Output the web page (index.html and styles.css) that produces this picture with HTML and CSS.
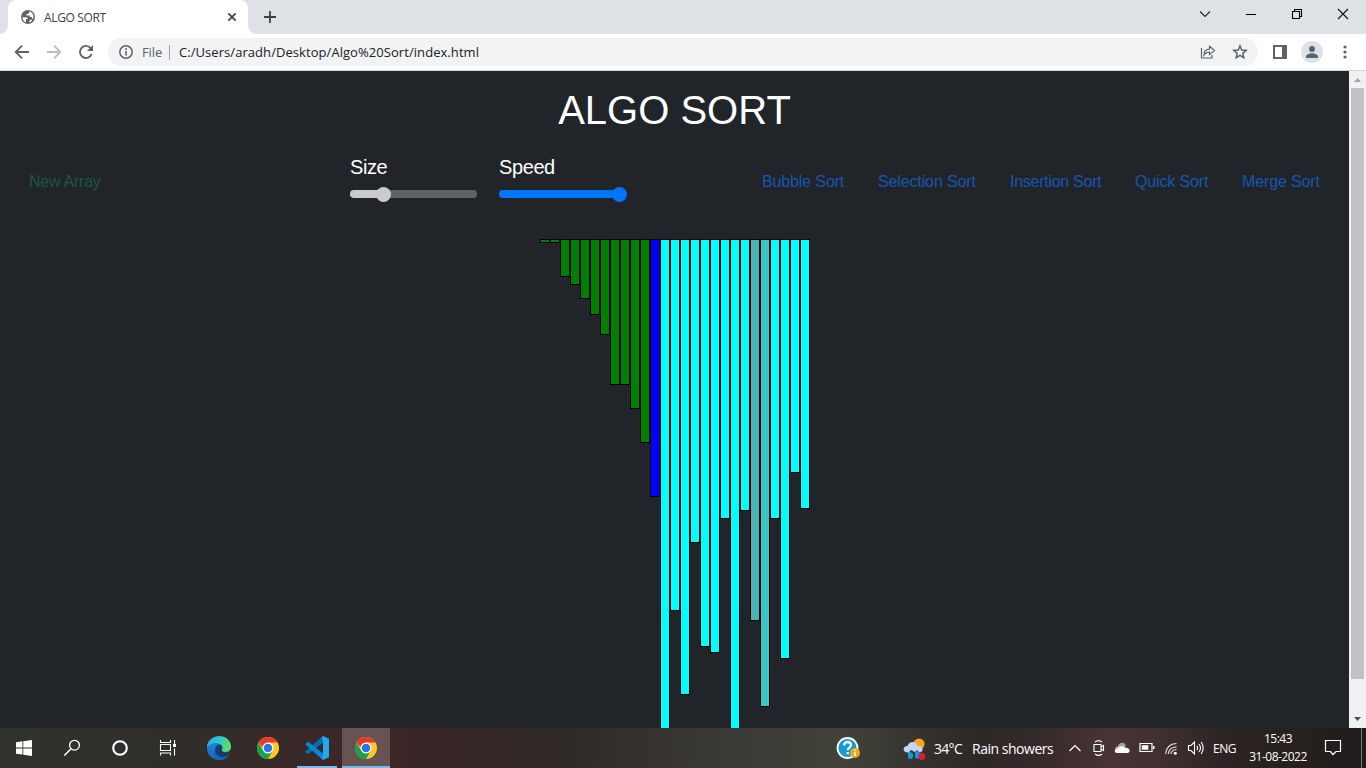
FILE: index.html
```html
<!DOCTYPE html>
<html lang="en">
<head>
<meta charset="utf-8">
<title>ALGO SORT</title>
<link rel="stylesheet" href="styles.css">
</head>
<body>
<div class="screen">
  <header class="tabstrip">
    <div class="tab">
      <svg class="globe" width="14" height="14" viewBox="0 0 14 14"><circle cx="7" cy="7" r="7" fill="#5f6368"/><path d="M1.4 7.2h3.2c1.6 0 2.3.8 2.3 1.8H5v3.3C2.9 11.7 1.4 9.600 1.400 7.200zM8 1.500v1.300c0 .7-.6 1.200-1.300 1.200H5.400v1.400h3.400v1.700h2.100v1.300h1.500C13.200 5 11 1.900 8 1.500zM8.200 12.400v-1.300l1.400-1.300h1.900c-.7 1.400-1.900 2.300-3.300 2.600z" fill="#fff"/></svg>
      <span class="tab-title">ALGO SORT</span>
      <svg class="tab-close" width="10" height="10" viewBox="0 0 10 10"><path d="M1.300 1.300l7.400 7.400M8.700 1.300l-7.400 7.400" stroke="#3c4043" stroke-width="1.700"/></svg>
    </div>
    <svg class="new-tab" width="12" height="12" viewBox="0 0 12 12"><path d="M6 0v12M0 6h12" stroke="#3c4043" stroke-width="1.800"/></svg>
    <div class="window-controls">
      <svg width="12" height="12" viewBox="0 0 12 12"><path d="M1 3.500l5 5 5-5" fill="none" stroke="#222" stroke-width="1.100"/></svg>
      <svg width="12" height="12" viewBox="0 0 12 12"><path d="M1 6.500h10" stroke="#000"/></svg>
      <svg width="12" height="12" viewBox="0 0 12 12"><path d="M1.500 3.500h7v7h-7zM3.500 3.500v-2h7v7h-2" fill="none" stroke="#000" stroke-width="1.100"/></svg>
      <svg width="12" height="12" viewBox="0 0 12 12"><path d="M1 1l10 10M11 1L1 11" stroke="#111" stroke-width="1.100"/></svg>
    </div>
  </header>
  <div class="toolbar">
    <div class="nav-icons">
      <svg width="16" height="16" viewBox="0 0 16 16"><path d="M15 8H2M8 1.700L1.700 8 8 14.300" fill="none" stroke="#5f6368" stroke-width="1.800"/></svg>
      <svg width="16" height="16" viewBox="0 0 16 16"><path d="M1 8h13M8 1.700L14.300 8 8 14.300" fill="none" stroke="#b9bbbd" stroke-width="1.800"/></svg>
      <svg width="16" height="16" viewBox="0 0 16 16"><path d="M13.600 10A6 6 0 1 1 12.600 4.100" fill="none" stroke="#5f6368" stroke-width="1.900"/><path d="M15 1v6H9z" fill="#5f6368"/></svg>
    </div>
    <div class="omnibox">
      <svg width="14" height="14" viewBox="0 0 14 14"><circle cx="7" cy="7" r="6.200" fill="none" stroke="#5f6368" stroke-width="1.500"/><path d="M7 6v4.500M7 3.300v1.600" stroke="#5f6368" stroke-width="1.600"/></svg>
      <span class="scheme">File</span>
      <span class="divider"></span>
      <span class="url">C:/Users/aradh/Desktop/Algo%20Sort/index.html</span>
      <svg class="share" width="16" height="16" viewBox="0 0 16 16"><path d="M1.500 4v10h10.500v-3" fill="none" stroke="#5f6368" stroke-width="1.200"/><path d="M4 11c.2-4 2.500-5.900 5.500-5.900V2.200L14.600 6.500 9.500 10.600V8C7 8 5.500 8.900 4 11z" fill="none" stroke="#5f6368" stroke-width="1.200"/></svg>
      <svg class="star" width="16" height="16" viewBox="0 0 16 16"><path d="M8 2l1.750 4.050 4.400.4-3.320 2.900.98 4.300L8 11.400l-3.810 2.250.98-4.300-3.320-2.900 4.400-.4z" fill="none" stroke="#5f6368" stroke-width="1.500"/></svg>
    </div>
    <svg class="side-panel" width="14" height="14" viewBox="0 0 14 14"><path d="M0 0h14v14H0zM2 2v10h7V2z" fill="#5f6368" fill-rule="evenodd"/></svg>
    <svg class="profile" width="22" height="22" viewBox="0 0 22 22"><circle cx="11" cy="11" r="11" fill="#dee1e6"/><circle cx="11" cy="8" r="3" fill="#55617a"/><path d="M5 17v-1.500c0-2 3.500-3.300 6-3.300s6 1.300 6 3.300V17z" fill="#55617a"/></svg>
    <svg class="menu" width="4" height="14" viewBox="0 0 4 14"><circle cx="2" cy="2" r="1.600" fill="#5f6368"/><circle cx="2" cy="7" r="1.600" fill="#5f6368"/><circle cx="2" cy="12" r="1.600" fill="#5f6368"/></svg>
  </div>
  <div class="viewport">
    <main class="page">
      <h1>ALGO SORT</h1>
      <nav class="controls">
        <a class="new-array">New Array</a>
        <div class="sliders">
          <div class="field"><span class="label">Size</span><div class="slider size"><i class="thumb"></i></div></div>
          <div class="field"><span class="label">Speed</span><div class="slider speed"><i class="thumb"></i></div></div>
        </div>
        <div class="sorts"><a class="s1">Bubble Sort</a><a class="s2">Selection Sort</a><a class="s3">Insertion Sort</a><a class="s4">Quick Sort</a><a class="s5">Merge Sort</a></div>
      </nav>
      <div class="bars">
        <i class="bar done" style="height:4px"></i><i class="bar done" style="height:4px"></i><i class="bar done" style="height:38px"></i><i class="bar done" style="height:46px"></i><i class="bar done" style="height:60px"></i><i class="bar done" style="height:76px"></i><i class="bar done" style="height:96px"></i><i class="bar done" style="height:146px"></i><i class="bar done" style="height:146px"></i><i class="bar done" style="height:170px"></i><i class="bar done" style="height:204px"></i><i class="bar current" style="height:258px"></i><i class="bar" style="height:500px"></i><i class="bar" style="height:372px"></i><i class="bar" style="height:456px"></i><i class="bar" style="height:304px"></i><i class="bar" style="height:408px"></i><i class="bar" style="height:414px"></i><i class="bar" style="height:280px"></i><i class="bar" style="height:500px"></i><i class="bar" style="height:272px"></i><i class="bar fade-a" style="height:382px"></i><i class="bar fade-b" style="height:468px"></i><i class="bar" style="height:280px"></i><i class="bar" style="height:420px"></i><i class="bar" style="height:234px"></i><i class="bar" style="height:270px"></i>
      </div>
    </main>
    <div class="scrollbar">
      <svg width="17" height="17" viewBox="0 0 17 17"><path d="M5 11l3.500-4 3.500 4z" fill="#a3a3a3"/></svg>
      <div class="scroll-thumb"></div>
      <svg width="17" height="17" viewBox="0 0 17 17"><path d="M5 6l3.500 4L12 6z" fill="#505050"/></svg>
    </div>
  </div>
  <footer class="taskbar">
    <div class="apps">
      <div class="app"><svg width="16" height="16" viewBox="0 0 16 16"><path d="M0 2.300L6.500 1.300v6.200H0zM7.300 1.200L16 0v7.500H7.300zM0 8.400h6.500v6.200L0 13.700zM7.300 8.400H16V16l-8.700-1.300z" fill="#fff"/></svg></div>
      <div class="app"><svg width="18" height="18" viewBox="0 0 18 18"><circle cx="11.500" cy="6.200" r="4.900" fill="none" stroke="#fff" stroke-width="1.300"/><path d="M8 9.800L1.300 16.500" stroke="#fff" stroke-width="1.500"/></svg></div>
      <div class="app"><svg width="18" height="18" viewBox="0 0 18 18"><circle cx="9" cy="9" r="6.800" fill="none" stroke="#fff" stroke-width="2.100"/></svg></div>
      <div class="app"><svg width="18" height="18" viewBox="0 0 18 18"><path d="M1.500 1v2.500h10V1M1.500 16.500V14h10v2.500M1.500 5.500h10v6h-10zM15.500 1v4M15.500 9.500v7" fill="none" stroke="#fff" stroke-width="1.100"/><path d="M14 5h3v3h-3z" fill="#fff"/></svg></div>
      <div class="app edge"><svg width="24" height="24" viewBox="0 0 24 24"><defs><linearGradient id="eg" x1="0" y1=".2" x2="1" y2=".5"><stop offset="0" stop-color="#2ea9e6"/><stop offset=".5" stop-color="#31c7cc"/><stop offset="1" stop-color="#62df59"/></linearGradient><linearGradient id="eb" x1="0" y1="0" x2="0" y2="1"><stop offset="0" stop-color="#238bd8"/><stop offset="1" stop-color="#116cc5"/></linearGradient></defs><circle cx="12" cy="12" r="12" fill="url(#eb)"/><path d="M0 11C1-2 22-4 24 10c.3 5-4.500 7-8.500 5.300-2-.9 0-1.800-.1-3.500C15 6 5 5 0 11z" fill="url(#eg)"/><path d="M8 14c0-3.200 2-5.100 4.500-5.500 2 .5 3 1.800 2.900 3.400-.1 1.500-1.600 1.900-.3 3.300 2.500 2 6 1 8 .6-1 4-5 6-8.500 5.500C10.500 20.500 8 17 8 14z" fill="#123f73"/><path d="M8 14c0 4 3 7.500 6.800 7.700 3 .2 5.600-1 7.200-3.200C20 22.500 16 24.300 12 24 7 23.500 4.500 18 8 14z" fill="#1565b0"/><path d="M14.500 12c-.1 1.600-1 2 .1 3.300C17 18 23 17 24 12.500V18l-2 .2c-3 .6-6.500 0-8.500-2.500-1-1.500-.2-3 1-3.700z" fill="#34302c"/></svg></div>
      <div class="app chrome"><svg width="22" height="22" viewBox="0 0 22 22"><circle cx="11" cy="11" r="11" fill="#ffc91f"/><path d="M1.470 5.500A11 11 0 0 1 20.530 5.500H11v11z" fill="#e9382d"/><path d="M1.470 5.500A11 11 0 0 0 11 22L15.760 13.750H6.240z" fill="#1aa14e"/><circle cx="11" cy="11" r="5.500" fill="#fff"/><circle cx="11" cy="11" r="4.300" fill="#2b73e8"/></svg></div>
      <div class="app running"><svg width="24" height="24" viewBox="0 0 24 24"><path d="M18 0v6.600L3.200 18.300.2 15.600z" fill="#006fb8"/><path d="M.2 8.400l3-2.700L18 17.400V24z" fill="#0688d2"/><path d="M18 0l6 2.800v18.400L18 24l-1-1 1-5.600V6.600L17 1z" fill="#25a7ee"/></svg></div>
      <div class="app active"><svg width="22" height="22" viewBox="0 0 22 22"><circle cx="11" cy="11" r="11" fill="#ffc91f"/><path d="M1.470 5.500A11 11 0 0 1 20.530 5.500H11v11z" fill="#e9382d"/><path d="M1.470 5.500A11 11 0 0 0 11 22L15.760 13.750H6.240z" fill="#1aa14e"/><circle cx="11" cy="11" r="5.500" fill="#fff"/><circle cx="11" cy="11" r="4.300" fill="#2b73e8"/></svg></div>
    </div>
    <svg class="help" width="24" height="24" viewBox="0 0 24 24"><circle cx="11.500" cy="11" r="10" fill="#1299d6" stroke="#fff" stroke-width="1.800"/><path d="M8 8.500C8 3.800 15 4.100 15 8c0 2.500-3.300 2.700-3.300 5.200M11.700 15v2.300" fill="none" stroke="#fff" stroke-width="2.300"/><circle cx="19" cy="16" r="5" fill="#eda923"/><path d="M19 15v4M19 12.500v1.500" stroke="#fff" stroke-width="1.400"/></svg>
    <svg class="weather" width="23" height="22" viewBox="0 0 23 22"><circle cx="16" cy="6" r="5.600" fill="#f6a51b"/><path d="M5 11.500l5 4.500v2.500a2.500 2.500 0 0 1-5 0zM12 11.500l5 4v2.700a2.500 2.500 0 0 1-5 0z" fill="#159bdb"/><path d="M5 14.500C-1 14.500-.5 8 4.500 8 6 2.500 13.500 2.700 14.600 8c5-1 7.400 5.500 2 6.500l-3-2.500-2 2-3.500-2z" fill="#c4d5f2"/><circle cx="18.800" cy="18.500" r="3.400" fill="#e5173c"/></svg>
    <span class="temp">34°C</span><span class="forecast">Rain showers</span>
    <div class="tray">
      <svg width="14" height="16" viewBox="0 0 14 16"><path d="M1.500 11L7 5.500l5.500 5.500" fill="none" stroke="#fff" stroke-width="1.200"/></svg>
      <svg class="meet" width="14" height="18" viewBox="0 0 14 18"><path d="M2 5.500h7v7H2zM9 8l2.500-1.500v5L9 10M3 3q3.500-2.800 7 0M3 15q3.500 2.800 7 0" fill="none" stroke="#fff" stroke-width="1.100"/></svg>
      <svg width="16" height="12" viewBox="0 0 16 12"><path d="M3 9C0 8 1 4 4 4.200 5-.5 11-.5 12 4z" fill="#aaa3a2"/><path d="M3 11c-3 0-3-4 .2-4.300C6 3 10 4 11.500 5.800 16 5 17.500 11 13 11z" fill="#fff"/></svg>
      <svg width="16" height="12" viewBox="0 0 16 12"><path d="M1 1.500h12v8H1z" fill="none" stroke="#fff" stroke-width="1.200"/><path d="M2.800 3.300h6.500v4.500H2.800zM14 4h1.500v3H14z" fill="#fff"/></svg>
      <svg width="14" height="16" viewBox="0 0 14 16"><path d="M1.500 14C2 8 6 3.500 12.500 3.500M4.300 14c.3-4 3.500-7 8.200-7.200M7 14c.2-3 2.500-4.300 5.500-4.500" fill="none" stroke="#ddd" stroke-width="1.200"/><circle cx="11.300" cy="13.200" r="1.500" fill="#fff"/></svg>
      <svg width="18" height="16" viewBox="0 0 18 16"><path d="M1.500 5.500h2.500L7.500 2v12L4 10.500H1.500zM9.800 5.800q1.700 2.200 0 4.400M12 4q3 4 0 8M14.200 2q4 6 0 12" fill="none" stroke="#fff" stroke-width="1.100"/></svg>
    </div>
    <span class="lang">ENG</span>
    <div class="clock"><span class="time">15:43</span><span class="date">31-08-2022</span></div>
    <svg class="notice" width="18" height="18" viewBox="0 0 18 18"><path d="M1.500 1.500h15v11H12L9 15.500 6.500 12.500h-5z" fill="none" stroke="#fff" stroke-width="1.200"/></svg>
    <span class="peek"></span>
  </footer>
</div>
</body>
</html>
```
FILE: styles.css
```css
* { box-sizing: border-box; }
body { margin: 0; overflow: hidden; font-family: "Open Sans", "Noto Sans", sans-serif; }
svg { display: block; flex: none; }
span, a { white-space: nowrap; }
.screen { width: 1366px; height: 768px; display: flex; flex-direction: column; overflow: hidden; }

.tabstrip { height: 34px; flex: none; display: flex; background: #dee1e6; padding-left: 8px; }
.tab { position: relative; width: 240px; height: 34px; display: flex; align-items: center; background: #fff; border-radius: 8px 8px 0 0; padding: 0 11px 0 13px; }
.tab::before, .tab::after { content: ""; position: absolute; bottom: 0; width: 8px; height: 8px; }
.tab::before { left: -8px; background: radial-gradient(circle at 0 0, #dee1e6 7.5px, #fff 8px); }
.tab::after { right: -8px; background: radial-gradient(circle at 100% 0, #dee1e6 7.5px, #fff 8px); }
.tab-title { margin-left: 9px; font-size: 12px; letter-spacing: -.35px; color: #3c4043; }
.tab-close { margin-left: auto; }
.new-tab { margin: 11px 0 0 16px; }
.window-controls { display: flex; gap: 34px; margin: 8px 17px 0 auto; }

.toolbar { height: 37px; flex: none; display: flex; align-items: center; background: #fff; border-bottom: 1px solid #d5d7da; padding-left: 14px; }
.nav-icons { display: flex; gap: 16px; width: 94px; flex: none; }
.omnibox { width: 1150px; height: 28px; flex: none; display: flex; align-items: center; border-radius: 14px; background: #f1f3f4; padding: 0 10px 0 11px; font-size: 13px; }
.scheme { margin-left: 9px; width: 20px; color: #5f6368; letter-spacing: -.1px; }
.divider { width: 1px; height: 15px; margin: 0 9px 0 7px; background: #9aa0a6; }
.url { color: #202124; letter-spacing: .06px; }
.share { margin-left: auto; }
.star { margin-left: 16px; }
.side-panel { margin-left: 15px; }
.profile { margin-left: 14px; }
.menu { margin-left: 20px; }

.viewport { height: 657px; flex: none; display: flex; background: #212529; overflow: hidden; }
.page { width: 1349px; height: 657px; overflow: hidden; font-family: "Liberation Sans", Arial, sans-serif; }
h1 { height: 48px; margin: 15px 0 0; font-size: 40px; font-weight: 400; line-height: 48px; text-align: center; color: #fff; }
.controls { height: 105px; display: flex; padding: 20px 29px 0 29px; }
.new-array { width: 321px; margin-top: 18px; font-size: 16px; line-height: 20px; letter-spacing: -.25px; color: #19573f; }
.sliders { display: flex; gap: 20px; }
.field { width: 129px; }
.label { display: block; height: 26px; font-size: 20px; line-height: 26px; letter-spacing: -.4px; color: #fff; }
.slider { display: flex; align-items: center; width: 127px; height: 8px; margin-top: 10px; border-radius: 4px; }
.thumb { width: 15px; height: 15px; border-radius: 50%; flex: none; }
.size { background: linear-gradient(90deg, #cbcbcb 34px, #5f6264 34px); }
.size .thumb { margin-left: 26px; background: #cbcbcb; }
.speed { background: #0075ff; }
.speed .thumb { margin-left: 112.5px; background: #0075ff; }
.sorts { display: flex; gap: 34px; margin: 18px 0 0 auto; font-size: 16px; line-height: 20px; letter-spacing: -.13px; color: #1655b3; }
.s1 { width: 82px; }
.s2 { width: 98px; }
.s3 { width: 91px; letter-spacing: -.27px; }
.s4 { width: 73px; }
.s5 { width: 78px; }
.bars { display: flex; align-items: flex-start; justify-content: center; }
.bar { width: 10px; flex: none; border: 1px solid #000; background: #0ff; }
.done { background: green; }
.current { background: #00f; }
.fade-a { background: #4ab3b3; }
.fade-b { background: #38c6c6; }

.scrollbar { width: 17px; background: #f1f1f1; display: flex; flex-direction: column; }
.scroll-thumb { width: 13px; height: 591px; margin: 0 2px 32px; background: #c1c1c1; }

.taskbar { height: 40px; flex: none; display: flex; align-items: center; color: #fff; background: linear-gradient(90deg, #30322c 0, #302e2a 180px, #3a2828 320px, #3e2626 390px, #392626 420px, #302a27 560px, #383631 690px, #42423a 840px, #3b3a33 880px, #2c2826 980px, #352a2b 1040px, #493337 1110px, #40302f 1160px, #2b2322 1230px, #211d1c 1366px); }
.apps { display: flex; height: 40px; width: 836px; flex: none; }
.app { width: 48px; height: 40px; display: flex; align-items: center; justify-content: center; }
.edge { width: 54px; }
.chrome { width: 44px; }
.running { width: 40px; margin-left: 7px; border-bottom: 2px solid #76b9ed; padding-top: 2px; }
.active { width: 48px; margin-left: 5px; background: #665352; border-bottom: 2px solid #76b9ed; padding-top: 2px; }
.help { margin-top: 1px; }
.weather { margin: 2px 0 0 43px; }
.temp { width: 38px; margin: 1px 0 0 8px; font-size: 14px; letter-spacing: -.7px; }
.forecast { width: 96px; margin-top: 1px; font-size: 14px; letter-spacing: -.48px; }
.tray { display: flex; align-items: center; gap: 9px; width: 145px; }
.meet { margin: 0 -1px 0 1px; }
.lang { width: 35px; font-size: 12px; letter-spacing: -.5px; }
.clock { display: flex; flex-direction: column; align-items: center; width: 60px; font-size: 12px; line-height: 18px; letter-spacing: -.5px; }
.notice { margin-left: 16px; }
.peek { width: 1px; height: 40px; margin-left: 19px; background: #777; }
```
